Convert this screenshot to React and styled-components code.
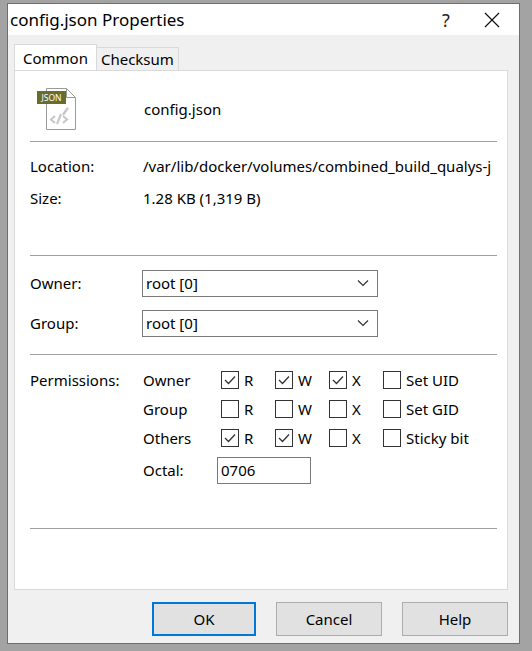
import React from "react";
import styled, { createGlobalStyle } from "styled-components";

const G = createGlobalStyle`
  html,body{margin:0;padding:0;background:#a3a3a3;}
  body{font-family:"Segoe UI","Noto Sans","Open Sans",sans-serif;font-size:15px;color:#000;}
`;
const Desk = styled.div`padding:3px 0 0 7px;width:532px;height:651px;box-sizing:border-box;`;
const Win = styled.div`
  width:513px;height:641px;box-sizing:border-box;background:#f0f0f0;
  border:1px solid #6f6f6f;display:flex;flex-direction:column;`;
const Title = styled.div`
  height:31px;background:#fff;display:flex;align-items:center;flex-shrink:0;
  font-size:17px;padding-left:2px;`;
const TitleText = styled.div`flex:1;`;
const TBtn = styled.div`width:${p=>p.w}px;display:flex;justify-content:center;align-items:center;font-size:18px;color:#222;`;
const Body = styled.div`padding:9px 11px 0 6px;display:flex;flex-direction:column;flex:1;`;
const Tabs = styled.div`display:flex;align-items:flex-end;height:26px;`;
const Tab = styled.div`
  height:${p=>p.active?26:23}px;box-sizing:border-box;padding:0 ${p=>p.active?8:4}px;
  background:${p=>p.active?"#fff":"#f0f0f0"};border:1px solid #d9d9d9;border-bottom:none;
  display:flex;align-items:center;
  ${p=>p.active?"":"border-left:none;"}
`;
const Panel = styled.div`
  background:#fff;border:1px solid #d9d9d9;height:520px;box-sizing:border-box;
  padding:14px 10px 0 15px;display:flex;flex-direction:column;`;
const Head = styled.div`display:flex;align-items:center;height:48px;padding-left:6px;gap:62px;`;
const Sep = styled.div`height:1px;background:#a0a0a0;margin:${p=>p.m};`;
const Row = styled.div`display:flex;align-items:center;height:${p=>p.h||32}px;`;
const Label = styled.div`width:${p=>p.w||113}px;flex-shrink:0;`;
const Select = styled.div`
  width:236px;height:27px;box-sizing:border-box;border:1px solid #7a7a7a;
  display:flex;align-items:center;padding:0 8px 0 3px;justify-content:space-between;`;
const PermGrid = styled.div`display:grid;grid-template-columns:113px 78px 54px 54px 54px auto;`;
const Cell = styled.div`height:29px;display:flex;align-items:center;`;
const Box = styled.span`
  width:18px;height:18px;box-sizing:border-box;border:1px solid #333;margin-right:5px;
  display:inline-flex;align-items:center;justify-content:center;`;
const Input = styled.div`
  width:94px;height:27px;box-sizing:border-box;border:1px solid #7a7a7a;padding:2px 3px;`;
const Buttons = styled.div`display:flex;justify-content:flex-end;gap:20px;padding-top:12px;`;
const Btn = styled.div`
  width:${p=>p.w}px;height:34px;box-sizing:border-box;background:#e1e1e1;
  border:${p=>p.def?"2px solid #0078d7":"1px solid #adadad"};
  display:flex;align-items:center;justify-content:center;`;

const Check = ({on,label}) => (
  <Cell><Box>{on ? <svg width="12" height="10" viewBox="0 0 12 10"><path d="M1 5l3.5 3.5L11 1.5" fill="none" stroke="#333" strokeWidth="1.3"/></svg> : null}</Box>{label}</Cell>
);

const FileIcon = () => (
  <svg width="46" height="46" viewBox="0 0 46 46">
    <path d="M10.5 2.5h20l9 9v32h-29z" fill="#fff" stroke="#9a9a9a"/>
    <path d="M30.5 2.5v9h9" fill="none" stroke="#9a9a9a"/>
    <rect x="1" y="5" width="29" height="13" fill="#6b6b2b"/>
    <text x="15.5" y="15" fontSize="8.5" fill="#fff" textAnchor="middle" fontFamily="Noto Sans, sans-serif">JSON</text>
    <path d="M19 30l-4 3.5 4 3.5M27 30l4 3.5-4 3.5M21 38l4-10" fill="none" stroke="#c8c8c8" strokeWidth="2.2"/>
    <path d="M26 28l5-7 2 1.5-5 7z" fill="#c8c8c8"/>
  </svg>
);

const Chevron = () => <svg width="12" height="8" viewBox="0 0 12 8"><path d="M1 1.5l5 5 5-5" fill="none" stroke="#333" strokeWidth="1.2"/></svg>;

const perms = [
  ["Owner",[1,1,1],"Set UID"],
  ["Group",[0,0,0],"Set GID"],
  ["Others",[1,1,0],"Sticky bit"],
];

export default function App(){
  return (<><G/><Desk><Win>
    <Title><TitleText>config.json Properties</TitleText><TBtn w={46}>?</TBtn><TBtn w={46} style={{marginRight:4}}>
      <svg width="16" height="16" viewBox="0 0 16 16"><path d="M1 1l14 14M15 1L1 15" stroke="#111" strokeWidth="1.2"/></svg></TBtn></Title>
    <Body>
      <Tabs><Tab active>Common</Tab><Tab>Checksum</Tab></Tabs>
      <Panel>
        <Head><FileIcon/><span>config.json</span></Head>
        <Sep m="8px 0 8px 0"/>
        <Row><Label>Location:</Label>/var/lib/docker/volumes/combined_build_qualys-j</Row>
        <Row><Label>Size:</Label>1.28 KB (1,319 B)</Row>
        <Sep m="41px 0 9px 0"/>
        <Row h={36}><Label w={112}>Owner:</Label><Select>root [0]<Chevron/></Select></Row>
        <Row h={44}><Label w={112}>Group:</Label><Select>root [0]<Chevron/></Select></Row>
        <Sep m="9px 0 10px 0"/>
        <PermGrid>
          {perms.map(([n,c,x],i)=>(<React.Fragment key={n}>
            <Cell>{i===0?"Permissions:":""}</Cell><Cell>{n}</Cell>
            <Check on={!!c[0]} label="R"/><Check on={!!c[1]} label="W"/><Check on={!!c[2]} label="X"/><Check on={false} label={x}/>
          </React.Fragment>))}
        </PermGrid>
        <Row h={36}><Label>&nbsp;</Label><Label w={74}>Octal:</Label><Input>0706</Input></Row>
        <Sep m="40px 0 0 0"/>
      </Panel>
      <Buttons><Btn w={104} def>OK</Btn><Btn w={106}>Cancel</Btn><Btn w={106}>Help</Btn></Buttons>
    </Body>
  </Win></Desk></>);
}
